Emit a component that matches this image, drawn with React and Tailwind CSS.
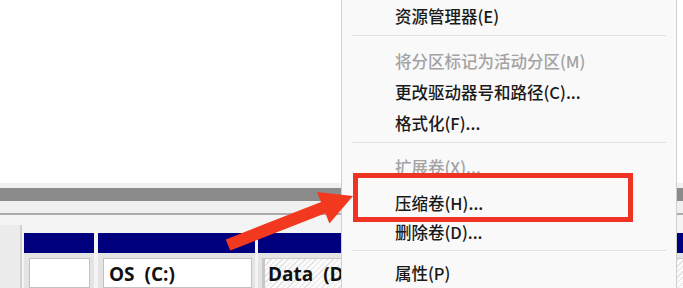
export default function App() {
  const cjk = "font-['Noto_Sans_CJK_SC','Noto_Sans',sans-serif]";
  const item = `flex items-center pl-[53px] text-[16.5px] font-medium ${cjk}`;
  return (
    <div className="relative w-[683px] h-[288px] overflow-hidden bg-white">
      {/* background window */}
      <div className="flex flex-col w-full h-full">
        <div className="h-[183px] bg-white" />
        <div className="h-[5px] bg-[#f0f0f0]" />
        <div className="h-[13px] bg-[#8b8b8b]" />
        <div className="h-[12px] bg-[#f0f0f0]" />
        <div className="h-[2px] bg-[#acacac]" />
        <div className="flex flex-1 bg-[#f4f4f4]">
          <div className="w-[22px] flex flex-col">
            <div className="h-[10px]" />
            <div className="flex-1 bg-[#ececec] border-r-2 border-[#d2d2d2]" />
          </div>
          <div className="flex-1 flex pt-[18px] pl-[2px]">
            <div className="w-[70px] flex flex-col">
              <div className="h-[20px] bg-[#00007f]" />
              <div className="flex-1 bg-[#e4e4e4] pt-[5px] pl-[5px] pr-[4px]">
                <div className="h-full bg-white border border-[#c2c2c2]" />
              </div>
            </div>
            <div className="w-[157px] ml-[4px] flex flex-col">
              <div className="h-[20px] bg-[#00007f]" />
              <div className="flex-1 bg-[#e4e4e4] pt-[5px] pl-[5px] pr-[3px]">
                <div className="h-full bg-white border border-[#c2c2c2] pl-[5px] pt-[2px]">
                  <span className="text-[19px] font-bold leading-[26px] text-[#111] whitespace-pre font-['Open_Sans','Noto_Sans',sans-serif]">
                    OS  (C:)
                  </span>
                </div>
              </div>
            </div>
            <div className="flex-1 ml-[3px] flex flex-col">
              <div className="h-[20px] bg-[#00007f]" />
              <div className="flex-1 bg-[#e4e4e4] pt-[5px] pl-[4px]">
                <div className="h-full border-l-[3px] border-t border-[#c8c8c8] bg-[repeating-linear-gradient(135deg,#e2e2e2_0px,#e2e2e2_1px,#fbfbfb_1px,#fbfbfb_4px)] pl-[3px] pt-[2px]">
                  <span className="text-[19px] font-bold leading-[26px] text-[#111] whitespace-pre font-['Open_Sans','Noto_Sans',sans-serif]">
                    Data  (D:)
                  </span>
                </div>
              </div>
            </div>
          </div>
        </div>
      </div>

      {/* context menu */}
      <div className="absolute left-[341px] top-0 w-[336px] h-[288px] bg-[#f9f9f9] border-l border-r border-[#d0d0d0] flex flex-col text-[#1a1a1a]">
        <div className={`${item} h-[33px]`}>资源管理器(E)</div>
        <div className="mt-[2px] mx-[10px] h-px bg-[#e0e0e0]" />
        <div className={`${item} mt-[10px] h-[31px] text-[#a3a3a3]`}>将分区标记为活动分区(M)</div>
        <div className={`${item} h-[31px]`}>更改驱动器号和路径(C)...</div>
        <div className={`${item} h-[31px]`}>格式化(F)...</div>
        <div className="mt-[3px] mx-[10px] h-px bg-[#e0e0e0]" />
        <div className={`${item} mt-[9px] h-[30px] text-[#a3a3a3]`}>扩展卷(X)...</div>
        <div className={`${item} h-[42px]`}>压缩卷(H)...</div>
        <div className={`${item} h-[16px]`}>删除卷(D)...</div>
        <div className="mt-[10px] mx-[10px] h-px bg-[#e0e0e0]" />
        <div className={`${item} mt-[9px] h-[26px]`}>属性(P)</div>

        {/* highlight annotation */}
        <div className="absolute left-[11px] top-[173px] w-[280px] h-[49px] border-[5px] border-[#ee3223]" />
      </div>

      {/* arrow annotation */}
      <svg className="absolute inset-0 pointer-events-none" width="683" height="288" viewBox="0 0 683 288">
        <polygon
          points="225.8,239.4 321,202.1 317,191.9 353,196 329.4,223.5 325.4,213.3 230.2,250.6"
          fill="#f2391f"
        />
      </svg>
    </div>
  );
}
